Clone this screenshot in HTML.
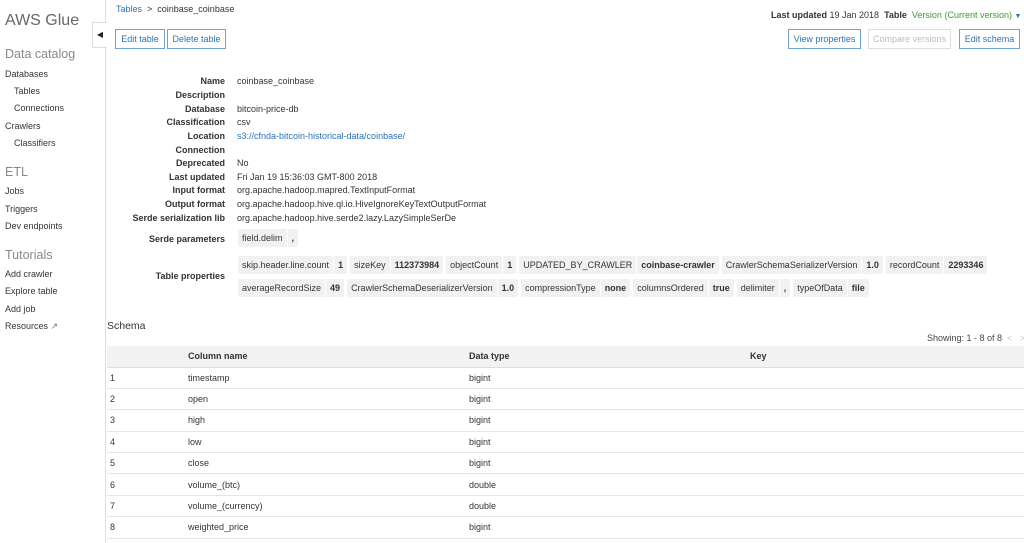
<!DOCTYPE html><html><head><style>
*{margin:0;padding:0;box-sizing:border-box}
body{width:1024px;height:543px;overflow:hidden;background:#fff;font-family:"Liberation Sans",Arial,sans-serif;font-size:9px;color:#333;position:relative}
.a{position:absolute;white-space:nowrap}
.side{position:absolute;left:0;top:0;width:106px;height:543px;border-right:1px solid #ddd}
.h1{font-size:16px;color:#666}
.h2{font-size:12.5px;color:#888}
.btn{position:absolute;height:20px;border:1px solid #6fa3d6;color:#2a73b8;font-size:9px;line-height:18px;text-align:center;background:#fff}
.lbl{position:absolute;right:799px;font-weight:bold;color:#333;white-space:nowrap}
.val{position:absolute;left:237px;white-space:nowrap}
.pr{position:absolute;left:238px;display:flex;gap:3px}
.p{display:flex;background:#f1f1f1;border-radius:2px;height:18px;line-height:18px}
.p span{padding:0 4px}
.p b{padding:0 4px;border-left:1px solid #fff}
table{position:absolute;left:107px;top:346px;width:917px;border-collapse:collapse}
th{background:#f2f2f2;height:21px;text-align:left;font-weight:bold;border-bottom:1px solid #ddd}
td{height:21.4px;border-bottom:1px solid #e6e6e6}
</style></head><body>
<div class="side">
<div class="a h1" style="left:5px;top:12px">AWS Glue</div>
<div class="a h2" style="left:5px;top:47px">Data catalog</div>
<div class="a" style="left:5px;top:69px">Databases</div>
<div class="a" style="left:14px;top:86px">Tables</div>
<div class="a" style="left:14px;top:103px">Connections</div>
<div class="a" style="left:5px;top:121px">Crawlers</div>
<div class="a" style="left:14px;top:138px">Classifiers</div>
<div class="a h2" style="left:5px;top:165px">ETL</div>
<div class="a" style="left:5px;top:186px">Jobs</div>
<div class="a" style="left:5px;top:204px">Triggers</div>
<div class="a" style="left:5px;top:221px">Dev endpoints</div>
<div class="a h2" style="left:5px;top:248px">Tutorials</div>
<div class="a" style="left:5px;top:269px">Add crawler</div>
<div class="a" style="left:5px;top:286px">Explore table</div>
<div class="a" style="left:5px;top:304px">Add job</div>
<div class="a" style="left:5px;top:321px">Resources <span style="color:#777">&#x2197;</span></div>
</div>
<div class="a" style="left:92px;top:22px;width:15px;height:26px;background:#fff;border:1px solid #ddd;border-right:none;font-size:8px;line-height:24px;text-align:center;color:#222">&#9664;</div>
<div class="a" style="left:116px;top:4px"><span style="color:#2a73b8">Tables</span> &nbsp;&gt;&nbsp; coinbase_coinbase</div>
<div class="a" style="left:771px;top:10px"><b>Last updated</b> 19 Jan 2018 &nbsp;<b>Table</b> &nbsp;<span style="color:#3a9b35">Version (Current version)</span> <span style="color:#2a73b8;font-size:7px">&#9660;</span></div>
<div class="btn" style="left:115px;top:29px;width:50px">Edit table</div>
<div class="btn" style="left:167px;top:29px;width:59px">Delete table</div>
<div class="btn" style="left:788px;top:29px;width:73px">View properties</div>
<div class="btn" style="left:868px;top:29px;width:83px;border-color:#ddd;color:#bbb">Compare versions</div>
<div class="btn" style="left:959px;top:29px;width:61px">Edit schema</div>
<div class="lbl" style="top:76px">Name</div><div class="val" style="top:76px">coinbase_coinbase</div>
<div class="lbl" style="top:90px">Description</div>
<div class="lbl" style="top:104px">Database</div><div class="val" style="top:104px">bitcoin-price-db</div>
<div class="lbl" style="top:117px">Classification</div><div class="val" style="top:117px">csv</div>
<div class="lbl" style="top:131px">Location</div><div class="val" style="top:131px;color:#2a73b8">s3://cfnda-bitcoin-historical-data/coinbase/</div>
<div class="lbl" style="top:145px">Connection</div>
<div class="lbl" style="top:158px">Deprecated</div><div class="val" style="top:158px">No</div>
<div class="lbl" style="top:172px">Last updated</div><div class="val" style="top:172px">Fri Jan 19 15:36:03 GMT-800 2018</div>
<div class="lbl" style="top:185px">Input format</div><div class="val" style="top:185px">org.apache.hadoop.mapred.TextInputFormat</div>
<div class="lbl" style="top:199px">Output format</div><div class="val" style="top:199px">org.apache.hadoop.hive.ql.io.HiveIgnoreKeyTextOutputFormat</div>
<div class="lbl" style="top:213px">Serde serialization lib</div><div class="val" style="top:213px">org.apache.hadoop.hive.serde2.lazy.LazySimpleSerDe</div>
<div class="lbl" style="top:234px">Serde parameters</div>
<div class="pr" style="top:229px"><div class="p"><span>field.delim</span><b>,</b></div></div>
<div class="lbl" style="top:271px">Table properties</div>
<div class="pr" style="top:256px"><div class="p"><span>skip.header.line.count</span><b>1</b></div><div class="p"><span>sizeKey</span><b>112373984</b></div><div class="p"><span>objectCount</span><b>1</b></div><div class="p"><span>UPDATED_BY_CRAWLER</span><b>coinbase-crawler</b></div><div class="p"><span>CrawlerSchemaSerializerVersion</span><b>1.0</b></div><div class="p"><span>recordCount</span><b>2293346</b></div></div>
<div class="pr" style="top:279px"><div class="p"><span>averageRecordSize</span><b>49</b></div><div class="p"><span>CrawlerSchemaDeserializerVersion</span><b>1.0</b></div><div class="p"><span>compressionType</span><b>none</b></div><div class="p"><span>columnsOrdered</span><b>true</b></div><div class="p"><span>delimiter</span><b>,</b></div><div class="p"><span>typeOfData</span><b>file</b></div></div>
<div class="a" style="left:107px;top:320px;font-size:10.5px">Schema</div>
<div class="a" style="left:927px;top:333px;color:#444">Showing: 1 - 8 of 8 &nbsp;<span style="color:#ccc">&lt; &nbsp; &gt;</span></div>
<table>
<tr><th style="width:81px"></th><th style="width:281px">Column name</th><th style="width:281px">Data type</th><th>Key</th></tr>
<tr><td style="padding-left:3px">1</td><td>timestamp</td><td>bigint</td><td></td></tr>
<tr><td style="padding-left:3px">2</td><td>open</td><td>bigint</td><td></td></tr>
<tr><td style="padding-left:3px">3</td><td>high</td><td>bigint</td><td></td></tr>
<tr><td style="padding-left:3px">4</td><td>low</td><td>bigint</td><td></td></tr>
<tr><td style="padding-left:3px">5</td><td>close</td><td>bigint</td><td></td></tr>
<tr><td style="padding-left:3px">6</td><td>volume_(btc)</td><td>double</td><td></td></tr>
<tr><td style="padding-left:3px">7</td><td>volume_(currency)</td><td>double</td><td></td></tr>
<tr><td style="padding-left:3px">8</td><td>weighted_price</td><td>bigint</td><td></td></tr>
</table>
</body></html>
